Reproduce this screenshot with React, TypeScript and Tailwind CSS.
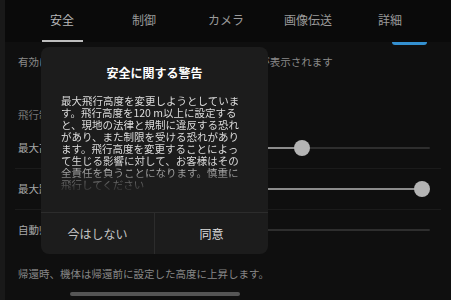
const tabs = ["安全", "制御", "カメラ", "画像伝送", "詳細"];

const bodyLines = [
  "最大飛行高度を変更しようとしていま",
  "す。飛行高度を120 m以上に設定する",
  "と、現地の法律と規制に違反する恐れ",
  "があり、また制限を受ける恐れがあり",
  "ます。飛行高度を変更することによっ",
  "て生じる影響に対して、お客様はその",
  "全責任を負うことになります。慎重に",
  "飛行してください",
];

function Slider({ value }: { value: number | null }) {
  // value: 0..1, null = empty track only
  const w = 190;
  const left = value === null ? 0 : value * (w - 16);
  return (
    <div className="relative h-4 w-[190px] shrink-0">
      <div className="absolute left-0 right-0 top-[7px] h-[2px] rounded-full bg-[#2e2e2e]" />
      {value !== null && (
        <>
          <div className="absolute left-0 top-[7px] h-[2px] rounded-full bg-[#8c8c8c]" style={{ width: left + 8 }} />
          <div className="absolute top-0 h-4 w-4 rounded-full bg-[#b4b4b4]" style={{ left }} />
        </>
      )}
    </div>
  );
}

function Row({ label, children }: { label: string; children: React.ReactNode }) {
  return (
    <div className="flex h-10 items-center pl-[13px] pr-[21px]">
      <span className="flex-1 text-[10.5px] leading-[14px] text-[#a8a8a8]">{label}</span>
      {children}
    </div>
  );
}

export default function App() {
  return (
    <div
      className="relative flex h-[300px] w-[451px] overflow-hidden bg-[#0d0d0d]"
      style={{ fontFamily: "'Noto Sans CJK JP', 'Noto Sans', sans-serif" }}
    >
      <div className="w-[5px] shrink-0 bg-[#191919]" />

      <div className="flex flex-1 flex-col">
        {/* Tabs */}
        <div className="flex h-[42px] shrink-0 bg-[#0a0a0a] pl-[16px]">
          {tabs.map((t, i) => (
            <div key={t} className="relative flex w-[82px] items-center justify-center pb-[2px]">
              <span className={i === 0 ? "text-[12px] text-[#b8b8b8]" : "text-[12px] text-[#9a9a9a]"}>{t}</span>
              {i === 0 && <div className="absolute bottom-0 h-[2px] w-[41px] bg-[#bdbdbd]" />}
            </div>
          ))}
        </div>

        {/* Content */}
        <div className="flex flex-1 flex-col bg-[#0f0f0f]">
          <div className="flex h-[2px] justify-end pr-[24px]">
            <div className="h-[3px] w-[35px] rounded-b-full bg-[#3490d0]" />
          </div>

          <p className="mt-[11px] whitespace-nowrap pl-[13px] text-[10.5px] leading-[14px] text-[#8a8a8a]">
            有効にすると、機体の周囲に障害物がある時、警告が表示されます
          </p>

          <p className="mt-[39px] pl-[13px] text-[10.5px] leading-[14px] text-[#767676]">飛行制限</p>

          <div className="mt-[6px]">
            <Row label="最大高度">
              <Slider value={0.31} />
            </Row>
          </div>
          <div className="mx-[10px] h-px bg-[#1b1b1b]" />
          <Row label="最大距離">
            <Slider value={1} />
          </Row>
          <div className="mx-[10px] h-px bg-[#1b1b1b]" />
          <Row label="自動帰還高度">
            <Slider value={null} />
          </Row>

          <p className="mt-[17px] whitespace-nowrap pl-[13px] text-[10.5px] leading-[14px] text-[#878787]">
            帰還時、機体は帰還前に設定した高度に上昇します。
          </p>

          <div className="ml-[65px] mt-[11px] h-[4px] w-[170px] rounded-full bg-[#555555]" />
        </div>
      </div>

      {/* Warning dialog */}
      <div className="absolute left-[41px] top-[47px] flex h-[207px] w-[227px] flex-col rounded-[8px] bg-[#1c1c1c]">
        <h2 className="mt-[18px] text-center text-[12px] font-bold leading-4 text-white">安全に関する警告</h2>
        <div className="mt-[14px] h-[99px] overflow-hidden pl-[20px] [mask-image:linear-gradient(to_bottom,black_68%,transparent)]">
          {bodyLines.map((l) => (
            <p key={l} className="whitespace-nowrap text-[10.5px] leading-[12px] text-[#dcdcdc]">
              {l}
            </p>
          ))}
        </div>
        <div className="mt-auto flex h-[42px] border-t border-[#2c2c2c]">
          <button className="flex flex-1 items-center justify-center border-r border-[#2c2c2c] text-[12px] text-[#c4c4c4]">
            今はしない
          </button>
          <button className="flex flex-1 items-center justify-center text-[12px] text-[#dedede]">同意</button>
        </div>
      </div>
    </div>
  );
}
